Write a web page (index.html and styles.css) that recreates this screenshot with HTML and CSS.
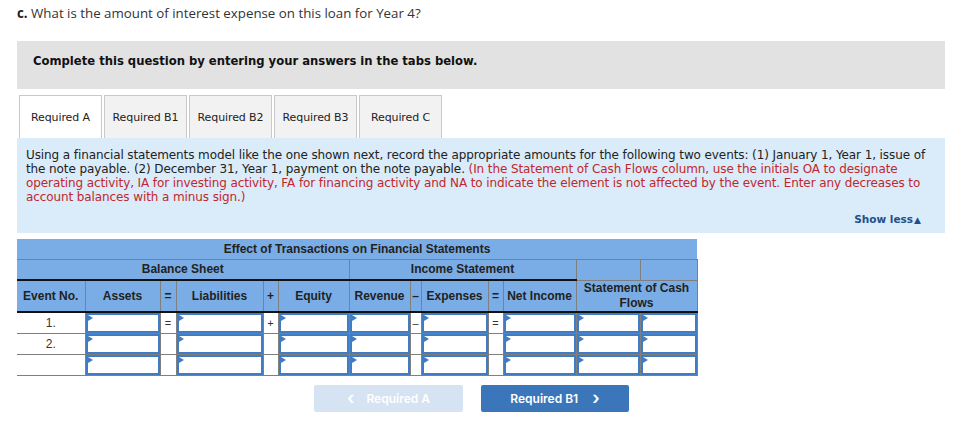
FILE: index.html
```html
<!DOCTYPE html>
<html>
<head>
<meta charset="utf-8">
<link rel="stylesheet" href="styles.css">
</head>
<body>
<div class="page">
  <p class="question"><b>c.</b> What is the amount of interest expense on this loan for Year 4?</p>
  <div class="instr">Complete this question by entering your answers in the tabs below.</div>
  <div class="tabs">
    <div class="tab active">Required A</div>
    <div class="tab">Required B1</div>
    <div class="tab">Required B2</div>
    <div class="tab">Required B3</div>
    <div class="tab">Required C</div>
  </div>
  <div class="panel">
    <p class="ptext">Using a financial statements model like the one shown next, record the appropriate amounts for the following two events: (1) January 1, Year 1, issue of the note payable. (2) December 31, Year 1, payment on the note payable. <span class="red">(In the Statement of Cash Flows column, use the initials OA to designate operating activity, IA for investing activity, FA for financing activity and NA to indicate the element is not affected by the event. Enter any decreases to account balances with a minus sign.)</span></p>
    <div class="showless">Show less<span class="tri">&#9650;</span></div>
  </div>
  <table class="fs">
    <colgroup>
      <col style="width:68px"><col style="width:75px"><col style="width:16px"><col style="width:87px"><col style="width:15px"><col style="width:71px"><col style="width:61px"><col style="width:11px"><col style="width:67px"><col style="width:15px"><col style="width:73px"><col style="width:64px"><col style="width:57px">
    </colgroup>
    <tr class="h1"><th colspan="13">Effect of Transactions on Financial Statements</th></tr>
    <tr class="h2"><th colspan="6" class="blk">Balance Sheet</th><th colspan="5" class="blk">Income Statement</th><th></th><th></th></tr>
    <tr class="h3"><th class="first">Event No.</th><th>Assets</th><th class="op">=</th><th>Liabilities</th><th class="op">+</th><th>Equity</th><th>Revenue</th><th class="op">&ndash;</th><th>Expenses</th><th class="op">=</th><th>Net Income</th><th colspan="2">Statement of Cash Flows</th></tr>
    <tr><td class="ev">1.</td><td class="in"><div class="box"></div></td><td class="op">=</td><td class="in"><div class="box"></div></td><td class="op">+</td><td class="in"><div class="box"></div></td><td class="in"><div class="box"></div></td><td class="op">&ndash;</td><td class="in"><div class="box"></div></td><td class="op">=</td><td class="in"><div class="box"></div></td><td class="in"><div class="box"></div></td><td class="in"><div class="box"></div></td></tr>
    <tr><td class="ev">2.</td><td class="in"><div class="box"></div></td><td class="op"></td><td class="in"><div class="box"></div></td><td class="op"></td><td class="in"><div class="box"></div></td><td class="in"><div class="box"></div></td><td class="op"></td><td class="in"><div class="box"></div></td><td class="op"></td><td class="in"><div class="box"></div></td><td class="in"><div class="box"></div></td><td class="in"><div class="box"></div></td></tr>
    <tr><td class="ev"></td><td class="in"><div class="box"></div></td><td class="op"></td><td class="in"><div class="box"></div></td><td class="op"></td><td class="in"><div class="box"></div></td><td class="in"><div class="box"></div></td><td class="op"></td><td class="in"><div class="box"></div></td><td class="op"></td><td class="in"><div class="box"></div></td><td class="in"><div class="box"></div></td><td class="in"><div class="box"></div></td></tr>
  </table>
  <div class="nav">
    <div class="btn prev"><span class="chev">&lsaquo;</span>Required A</div>
    <div class="btn next">Required B1<span class="chev r">&rsaquo;</span></div>
  </div>
</div>
</body>
</html>
```

FILE: styles.css
```css
* { box-sizing: border-box; }
body { margin: 0; background: #fff; }
.page { padding: 0 33px 0 17px; width: 978px; }
.question {
  margin: 0; padding-top: 4px; height: 41px;
  font-family: "Open Sans", sans-serif; font-size: 13.3px; color: #333;
}
.question b { color: #222; }
.instr {
  height: 48px; background: #e2e2e2; padding: 13px 16px 0;
  font-family: "DejaVu Sans", sans-serif; font-weight: bold; font-size: 11.6px; color: #111;
}
.tabs { display: flex; gap: 2px; margin-top: 6px; padding-left: 2px; }
.tab {
  width: 83px; height: 43px; border: 1px solid #c9c9c9; border-bottom: none;
  background: #f2f2f2; display: flex; align-items: center; justify-content: center;
  font-family: "DejaVu Sans", sans-serif; font-size: 11px; letter-spacing: -0.1px; color: #222;
}
.tab.active { background: #fff; }
.panel {
  background: #daebf9; height: 95px; padding: 10px 16px 0 9px;
  font-family: "DejaVu Sans", sans-serif; font-size: 12px; letter-spacing: -0.1px; color: #222;
}
.ptext { margin: 0; line-height: 14px; }
.red { color: #c1272d; }
.showless {
  text-align: right; margin-top: 9px; padding-right: 8px;
  font-size: 10.5px; font-weight: bold; color: #1f4f8b; letter-spacing: 0;
}
.tri { font-size: 9px; margin-left: 1px; }
.fs {
  margin-top: 6px; border-collapse: collapse; table-layout: fixed; width: 680px;
  font-family: "Liberation Sans", Arial, sans-serif; font-size: 12px;
}
.fs th {
  background: #7aade6; color: #222; font-weight: bold; padding: 0;
  border: 1px solid #7f7f7f; text-align: center;
}
.fs tr.h1 th { height: 20px; border-top: none; border-left: none; border-right: none; }
.fs tr.h2 th { height: 21px; }
.fs tr.h2 th.blk { border-bottom: 2px solid #111; }
.fs tr.h3 th { height: 32px; border-bottom: 2px solid #111; line-height: 15px; }
.fs th:first-child { border-left: none; }
.fs td {
  height: 21px; padding: 0; border: 1px solid #7f7f7f; background: #fff;
  text-align: center; color: #333; font-size: 12px;
}
.fs td.ev { border-left: none; }
.fs td.op { font-size: 11px; }
.fs td.in { padding: 0; }
.box {
  height: 20px; border: 2px solid #3f7cc4; position: relative; background: #fff;
}
.box::before {
  content: ""; position: absolute; left: 0; top: 0;
  border-left: 5px solid #3f7cc4; border-top: 3px solid transparent; border-bottom: 3px solid transparent;
}
.nav { display: flex; gap: 18px; margin-top: 9px; padding-left: 297px; }
.btn {
  width: 149px; height: 27px; border-radius: 2px;
  display: flex; align-items: center; justify-content: center;
  font-family: Inter, Roboto, sans-serif; font-weight: 600; font-size: 12px; color: #fff;
}
.btn.prev { background: #d6e3f2; }
.btn.next { background: #3b76bb; width: 148px; }
.chev { font-size: 18px; line-height: 1; margin-right: 12px; position: relative; top: -1px; }
.chev.r { margin-right: 0; margin-left: 14px; }
```
